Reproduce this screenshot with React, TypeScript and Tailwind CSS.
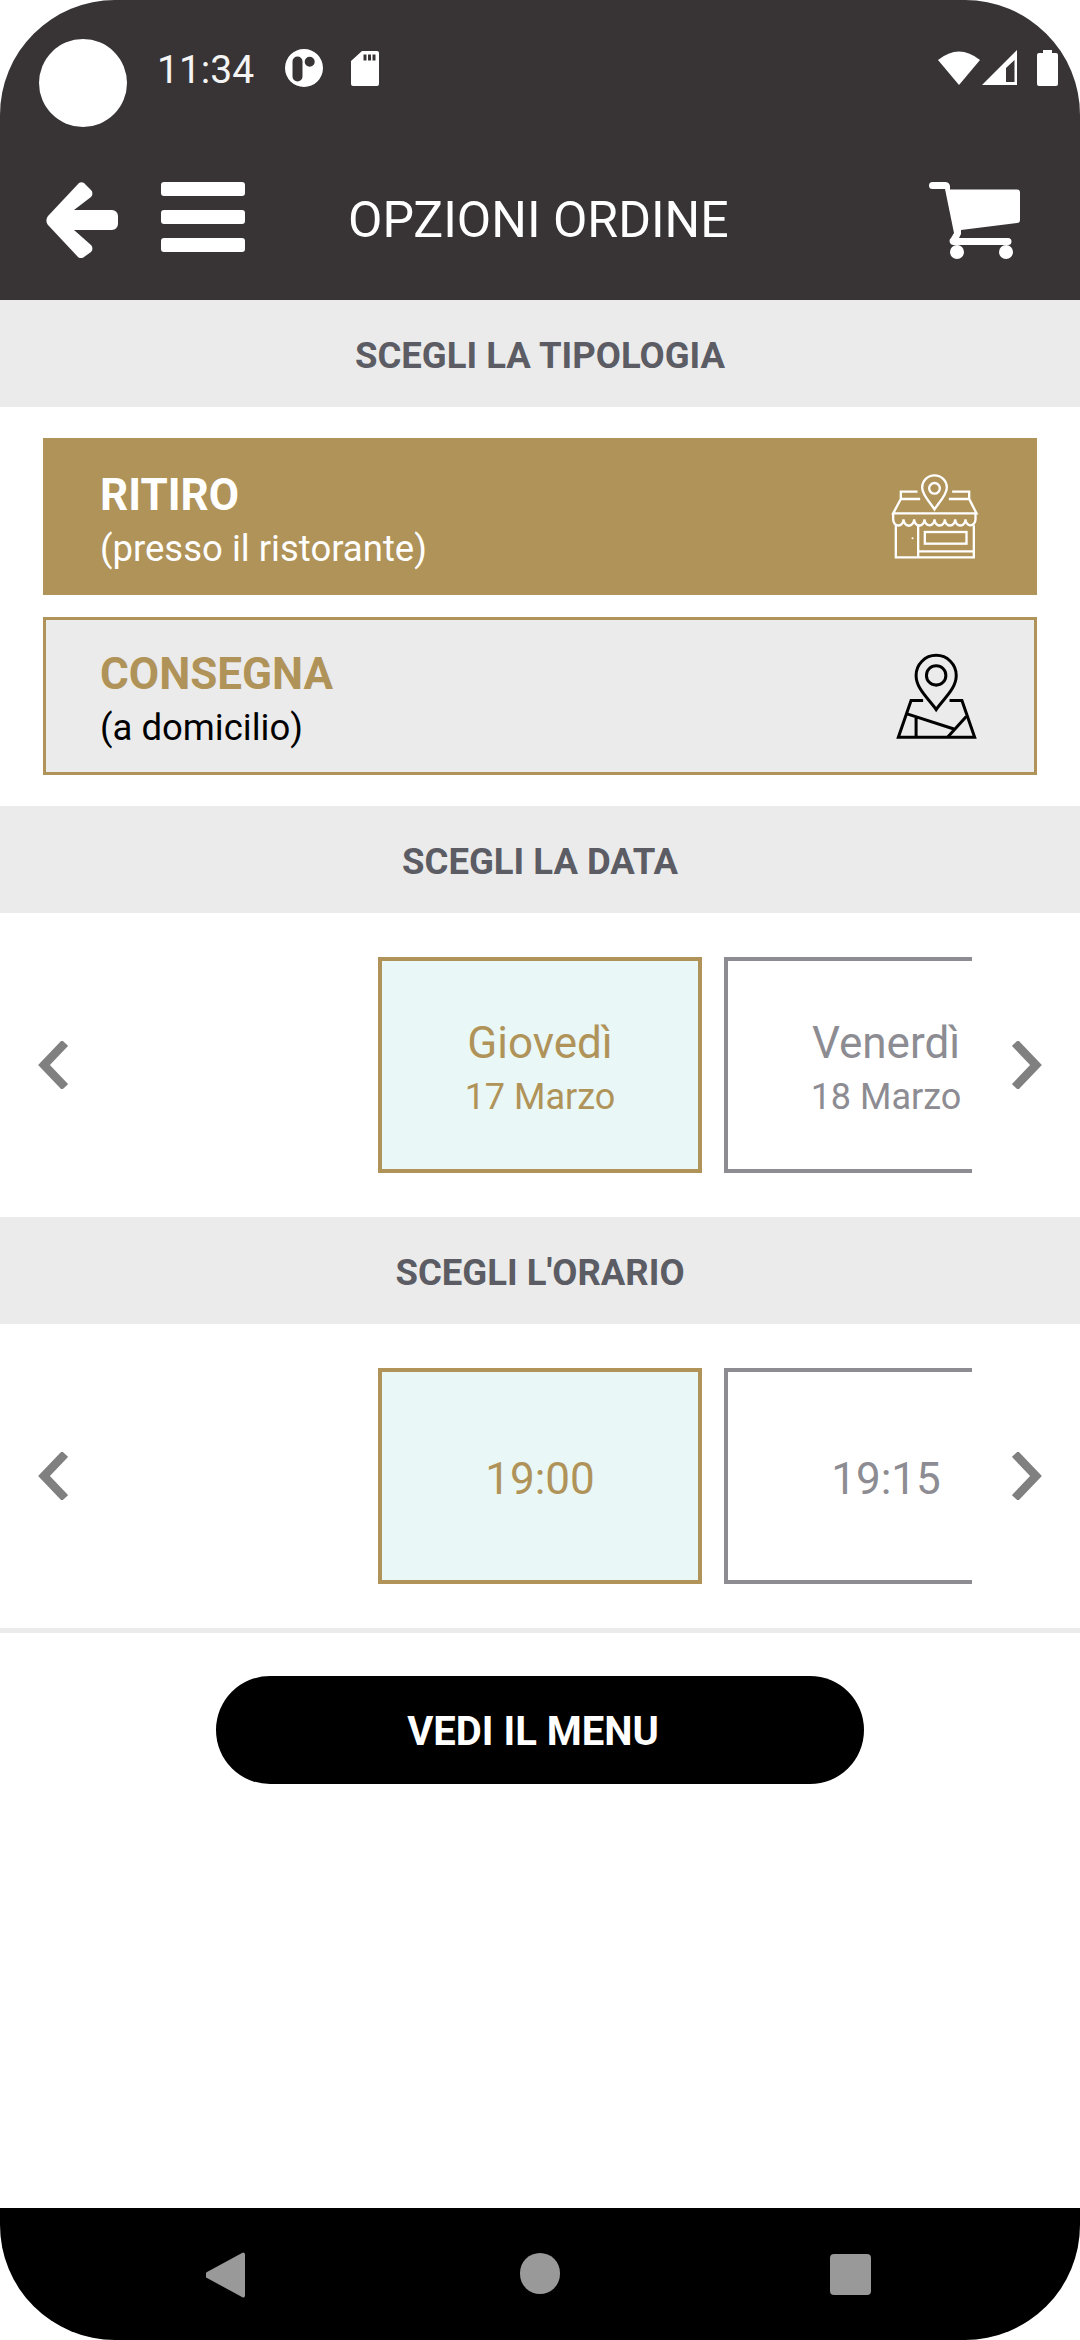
const GOLD = "#b09359";

function SectionTitle({ label }: { label: string }) {
  return (
    <div className="flex h-[107px] items-center justify-center bg-[#ebebeb] pt-[5px] text-[36.5px] font-bold text-[#5c5c64]">
      {label}
    </div>
  );
}

function Chevron({ dir }: { dir: "left" | "right" }) {
  return (
    <svg viewBox="0 0 30 48" className="h-[48px] w-[30px] shrink-0" fill="none" stroke="#808080" strokeWidth="8.5">
      <path d={dir === "left" ? "M27 2 L6 24 L27 46" : "M3 2 L24 24 L3 46"} />
    </svg>
  );
}

function Carousel({ cards }: { cards: { title: string; sub?: string; active?: boolean }[] }) {
  return (
    <div className="flex items-center py-[44px] pl-[38px] pr-[38px]">
      <Chevron dir="left" />
      <div className="mx-[40px] flex flex-1 gap-[22px] overflow-hidden pl-[270px]">
        {cards.map((c) => (
          <div
            key={c.title}
            className={
              c.active
                ? "flex h-[216px] w-[324px] shrink-0 flex-col items-center justify-center border-4 border-[#b09359] bg-[#e9f7f6] pt-[6px] text-[#b09359]"
                : "flex h-[216px] w-[324px] shrink-0 flex-col items-center justify-center border-4 border-[#8c8c92] bg-white pt-[6px] text-[#8c8c92]"
            }
          >
            <div className="text-[44px] leading-[50px]">{c.title}</div>
            {c.sub && <div className="mt-[7px] text-[36px] leading-[44px]">{c.sub}</div>}
          </div>
        ))}
      </div>
      <Chevron dir="right" />
    </div>
  );
}

function StoreIcon() {
  return (
    <svg viewBox="276 161 265 261" className="h-[87px] w-[90px]" fill="none" stroke="#fff" strokeWidth="7">
      <path d="M407 270 C390 245 370 225 370 205 a37 37 0 0 1 74 0 C444 225 424 245 407 270 Z" />
      <circle cx="407" cy="207" r="16" />
      <path d="M356 217 H306 V239 H364 M306 239 L283 282 H533 L511 239 H450 M511 239 V217 H460" />
      <path d="M283 282 V300 a15 18 0 0 0 31 0 a15 18 0 0 0 32 0 a15 18 0 0 0 31 0 a15 18 0 0 0 30 0 a15 18 0 0 0 31 0 a15 18 0 0 0 31 0 a15 18 0 0 0 31 0 a15 18 0 0 0 30 0 V282" />
      <path d="M291 318 V414 H525 V318 M358 320 V414 M358 396 H525" />
      <rect x="378" y="338" width="125" height="35" />
      <circle cx="341" cy="357" r="3" fill="#fff" stroke="none" />
    </svg>
  );
}

function MapIcon() {
  return (
    <svg viewBox="284 698 248 260" className="h-[87px] w-[83px]" fill="none" stroke="#000" strokeWidth="9">
      <path d="M407 867 C385 835 347 805 347 765 a60 60 0 0 1 120 0 C467 805 429 835 407 867 Z" />
      <circle cx="407" cy="765" r="29" />
      <path d="M368 840 H332 L294 950 H522 L484 840 H447" />
      <path d="M320 880 L460 925 M497 888 L441 950 M347 892 V950" />
    </svg>
  );
}

export default function App() {
  return (
    <div className="flex h-[2340px] w-[1080px] flex-col bg-white font-['Roboto',sans-serif]">
      {/* header + status bar */}
      <div className="h-[300px] rounded-t-[115px] bg-[#383435] text-white">
        <div className="flex h-[127px] items-start pl-[39px] pr-[22px] pt-[39px]">
          <div className="h-[88px] w-[88px] rounded-full bg-white" />
          <div className="ml-[30px] mt-[8px] text-[39px] leading-[46px] text-[#f4f4f4]">11:34</div>
          <svg viewBox="0 0 38 38" className="ml-[31px] mt-[10px] h-[38px] w-[38px]">
            <path
              fill="#fff"
              fillRule="evenodd"
              d="M19 0 a19 19 0 1 0 0 38 a19 19 0 0 0 0 -38 Z M12.5 7.5 a5 5 0 0 1 5 5 V27.5 a5 5 0 0 1 -10 0 V12.5 a5 5 0 0 1 5 -5 Z M24.7 7.7 a5 5 0 1 1 0 10 a5 5 0 0 1 0 -10 Z"
            />
          </svg>
          <svg viewBox="0 0 28 35" className="ml-[28px] mt-[12px] h-[35px] w-[28px]">
            <path
              fill="#fff"
              fillRule="evenodd"
              d="M11 0 H26 a2 2 0 0 1 2 2 V33 a2 2 0 0 1 -2 2 H2 a2 2 0 0 1 -2 -2 V10 Z M12.5 3.5 V9.5 H15.5 V3.5 Z M17 3.5 V9.5 H20 V3.5 Z M21.5 3.5 V9.5 H24.5 V3.5 Z"
            />
          </svg>
          <div className="ml-auto mt-[11px] flex items-start">
            <svg viewBox="0 0 42 35" className="h-[35px] w-[42px]">
              <path fill="#fff" d="M0 10 Q21 -7 42 10 L21 35 Z" />
            </svg>
            <svg viewBox="0 0 35 35" className="ml-[2px] h-[35px] w-[35px]">
              <path fill="#fff" fillRule="evenodd" d="M35 0 V35 H0 Z M32.5 10 L24 18 V32 H32.5 Z" />
            </svg>
            <svg viewBox="0 0 21 36" className="ml-[20px] h-[36px] w-[21px]">
              <path fill="#fff" d="M6 0 H15 V3 H19 a2 2 0 0 1 2 2 V34 a2 2 0 0 1 -2 2 H2 a2 2 0 0 1 -2 -2 V5 a2 2 0 0 1 2 -2 H6 Z" />
            </svg>
          </div>
        </div>
        <div className="flex h-[173px] items-start pl-[46px] pr-[60px] pt-[55px]">
          <svg viewBox="0 0 72 76" className="h-[76px] w-[72px] shrink-0" fill="#fff">
            <path d="M33 1 a5 5 0 0 1 5 0 L45 8 a5 5 0 0 1 0 7 L28 28 H66 a6 6 0 0 1 6 6 V42 a6 6 0 0 1 -6 6 H28 L45 63 a5 5 0 0 1 0 7 L38 75 a5 5 0 0 1 -6 0 L2 43 a7 7 0 0 1 0 -9 Z" />
          </svg>
          <div className="ml-[43px] flex w-[84px] shrink-0 flex-col gap-[14px]">
            <div className="h-[14px] rounded-[3px] bg-white" />
            <div className="h-[14px] rounded-[3px] bg-white" />
            <div className="h-[14px] rounded-[3px] bg-white" />
          </div>
          <div className="ml-[103px] mt-[8px] text-[50px] font-normal leading-[60px]">OPZIONI ORDINE</div>
          <svg viewBox="0 0 91 77" className="ml-auto h-[77px] w-[91px] shrink-0" fill="#fff">
            <path d="M3.5 0 H17 a5 5 0 0 1 4 4 L21 7.5 H88 a3 3 0 0 1 3 3 V38 a3 3 0 0 1 -3 3 L32 48 V52 L30 56 H79 a3.5 3.5 0 0 1 0 7 H24 a4 4 0 0 1 -2 -7 L25 51 L16 7 H3.5 a3.5 3.5 0 0 1 0 -7 Z" />
            <circle cx="28" cy="70" r="7" />
            <circle cx="77" cy="70" r="7" />
          </svg>
        </div>
      </div>

      <SectionTitle label="SCEGLI LA TIPOLOGIA" />
      <div className="flex flex-col gap-[22px] px-[43px] py-[31px]">
        <div className="flex h-[157px] items-center justify-between bg-[#b09359] pl-[57px] pr-[57px] text-white">
          <div className="pt-[7px]">
            <div className="text-[44px] font-bold leading-[50px]">RITIRO</div>
            <div className="mt-[7px] text-[36.5px] leading-[44px]">(presso il ristorante)</div>
          </div>
          <StoreIcon />
        </div>
        <div className="flex h-[158px] items-center justify-between border-[3px] border-[#b09359] bg-[#ebebeb] pl-[54px] pr-[56px]">
          <div className="pt-[7px]">
            <div className="text-[44px] font-bold leading-[50px]" style={{ color: GOLD }}>
              CONSEGNA
            </div>
            <div className="mt-[7px] text-[36.5px] leading-[44px] text-black">(a domicilio)</div>
          </div>
          <MapIcon />
        </div>
      </div>

      <SectionTitle label="SCEGLI LA DATA" />
      <Carousel
        cards={[
          { title: "Giovedì", sub: "17 Marzo", active: true },
          { title: "Venerdì", sub: "18 Marzo" },
        ]}
      />
      <SectionTitle label="SCEGLI L'ORARIO" />
      <Carousel cards={[{ title: "19:00", active: true }, { title: "19:15" }]} />
      <div className="h-[5px] bg-[#ebebeb]" />

      <div className="flex justify-center pt-[43px]">
        <div className="flex h-[108px] w-[648px] items-center justify-center rounded-[54px] bg-black pr-[14px] pt-[4px] text-[40px] font-bold text-white">
          VEDI IL MENU
        </div>
      </div>

      {/* android nav bar */}
      <div className="mt-auto flex h-[132px] items-start rounded-b-[115px] bg-black pl-[206px] pt-[44px]">
        <svg viewBox="0 0 39 46" className="h-[46px] w-[39px]">
          <path fill="#999" d="M36 1 a2 2 0 0 1 3 1 V44 a2 2 0 0 1 -3 1 L1 26 a3.5 3.5 0 0 1 0 -6 Z" />
        </svg>
        <div className="ml-[275px] mt-[1px] h-[41px] w-[40px] rounded-full bg-[#999]" />
        <div className="ml-[270px] mt-[2px] h-[41px] w-[41px] rounded-[4px] bg-[#999]" />
      </div>
    </div>
  );
}
